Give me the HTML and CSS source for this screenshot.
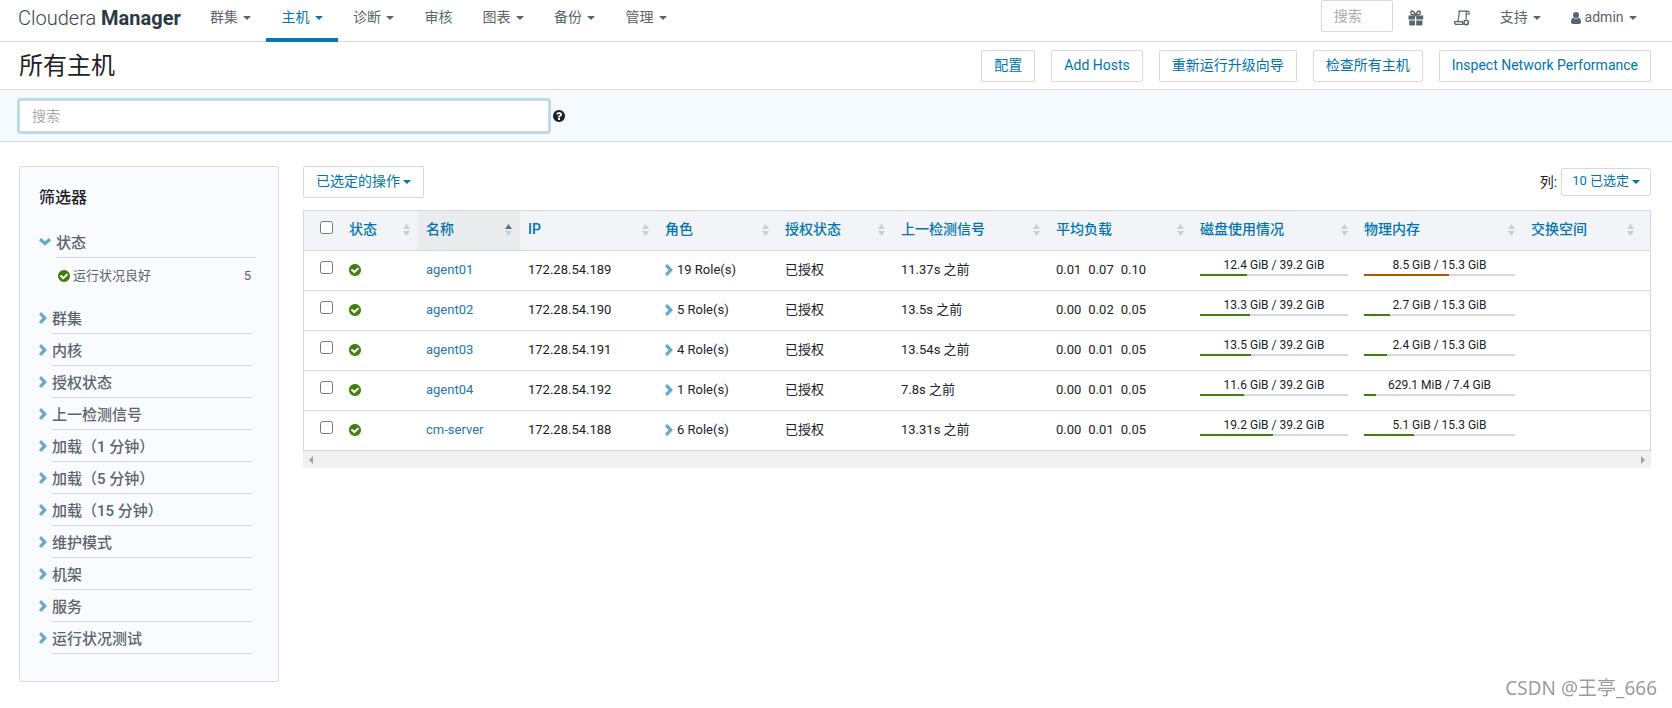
FILE: index.html
```html
<!DOCTYPE html>
<html lang="zh-CN">
<head>
<meta charset="utf-8">
<title>所有主机 - Cloudera Manager</title>
<link rel="stylesheet" href="styles.css">
</head>
<body>
<svg class="defs" aria-hidden="true">
  <symbol id="i-ok" viewBox="0 0 1536 1536"><circle cx="768" cy="768" r="700" fill="#fff"/><path fill="currentColor" d="M1284 606q0-28-18-46l-91-90q-19-19-45-19t-45 19l-408 407-226-226q-19-19-45-19t-45 19l-91 90q-18 18-18 46 0 27 18 45l362 362q19 19 45 19 27 0 46-19l543-543q18-18 18-45zm252 162q0 209-103 385.500t-279.500 279.500-385.500 103-385.500-103-279.500-279.500-103-385.500 103-385.500 279.500-279.500 385.500-103 385.500 103 279.500 279.500 103 385.500z"/></symbol>
  <symbol id="i-help" viewBox="128 128 1536 1536"><path fill="currentColor" d="M1024 1376v-192q0-14-9-23t-23-9h-192q-14 0-23 9t-9 23v192q0 14 9 23t23 9h192q14 0 23-9t9-23zm256-672q0-88-55.500-163t-138.500-116-170-41q-243 0-371 213-15 24 8 42l132 100q7 6 19 6 16 0 25-12 53-68 86-92 34-24 86-24 48 0 85.500 26t37.500 59q0 38-20 61t-68 45q-63 28-115.500 86.500t-52.500 125.500v36q0 14 9 23t23 9h192q14 0 23-9t9-23q0-19 21.500-49.500t54.500-49.500q32-18 49-28.500t46-35 44.500-48 28-60.500 12.500-81zm384 192q0 209-103 385.500t-279.500 279.500-385.500 103-385.500-103-279.500-279.500-103-385.500 103-385.500 279.500-279.500 385.500-103 385.500 103 279.500 279.500 103 385.500z"/></symbol>
  <symbol id="i-right" viewBox="0 0 8 12"><path fill="none" stroke="currentColor" stroke-width="3.200" d="M1.100 1.200 5.700 6l-4.600 4.800"/></symbol>
  <symbol id="i-down" viewBox="0 0 12 8"><path fill="none" stroke="currentColor" stroke-width="3.200" d="M1.100 1.300 6 5.700l4.900-4.400"/></symbol>
  <symbol id="i-sort" viewBox="0 0 7 12"><path class="up" d="M0 5 3.500 0 7 5z"/><path d="M0 7h7L3.500 12z"/></symbol>
  <symbol id="i-gift" viewBox="0 0 16 16"><path fill="currentColor" d="M0.500 5.500h6.500v4h-6.500zM8.200 5.500h7v4h-7zM1.200 10.500h5.800v5h-4.800q-1 0-1-1zM8.200 10.500h6.200v4q0 1-1 1h-5.200z"/><path fill="none" stroke="currentColor" stroke-width="1.500" d="M7.600 5.300C6 1.800 5 .9 3.900 1.100 2.500 1.400 2.600 4.600 4.400 4.800h6.400c1.800-.2 1.900-3.400.5-3.700C10.200.9 9.200 1.800 7.600 5.300z"/></symbol>
  <symbol id="i-scroll" viewBox="0 0 16 16"><g fill="none" stroke="currentColor" stroke-width="1.200"><path d="M4.400 1.200h9.200q1.600 0 1.600 1.800v1h-3V2.600q0-1.400 1.200-1.400M4.400 1.200q.9.300.9 1.600L4 11.500M12.200 4v5M9.500 14.400H2.200Q.4 14.200.7 11.600h7.600q0 2.400 1.400 2.800"/><circle cx="12.200" cy="12.500" r="2.200" stroke-width="1.600"/></g></symbol>
  <symbol id="i-user" viewBox="0 0 10 12"><path fill="currentColor" d="M5 0a3 3 0 0 1 3 3.200C8 5 6.700 6.400 5 6.400S2 5 2 3.200A3 3 0 0 1 5 0zM2.500 5.700C3.900 7.500 6.100 7.500 7.500 5.700 9.300 5.900 10 7.600 10 10c0 1.300-.8 2-1.900 2H1.900C.8 12 0 11.300 0 10c0-2.400.7-4.100 2.500-4.300z"/></symbol>
</svg>

<header class="navbar">
  <a class="brand" href="#">Cloudera <b>Manager</b></a>
  <nav class="menu">
    <a href="#">群集 <i class="caret"></i></a>
    <a href="#" class="active">主机 <i class="caret"></i></a>
    <a href="#">诊断 <i class="caret"></i></a>
    <a href="#">审核</a>
    <a href="#">图表 <i class="caret"></i></a>
    <a href="#">备份 <i class="caret"></i></a>
    <a href="#">管理 <i class="caret"></i></a>
  </nav>
  <div class="menu tools">
    <input class="nav-search" type="text" placeholder="搜索" aria-label="搜索">
    <a href="#" aria-label="新增功能"><svg class="icon16"><use href="#i-gift"/></svg></a>
    <a href="#" aria-label="运行命令"><svg class="icon16"><use href="#i-scroll"/></svg></a>
    <a href="#">支持 <i class="caret"></i></a>
    <a href="#"><svg class="user"><use href="#i-user"/></svg> admin <i class="caret"></i></a>
  </div>
</header>

<div class="titlebar">
  <h1>所有主机</h1>
  <div class="actions">
    <button class="btn">配置</button>
    <button class="btn">Add Hosts</button>
    <button class="btn">重新运行升级向导</button>
    <button class="btn">检查所有主机</button>
    <button class="btn">Inspect Network Performance</button>
  </div>
</div>

<div class="searchbar">
  <input type="text" class="host-search" placeholder="搜索" aria-label="搜索主机">
  <svg class="help"><use href="#i-help"/></svg>
</div>

<main class="content">
  <aside class="filters">
    <h2>筛选器</h2>
    <section class="open">
      <button class="facet"><svg class="down"><use href="#i-down"/></svg><span>状态</span></button>
      <a class="option" href="#"><svg class="ok small"><use href="#i-ok"/></svg><span>运行状况良好</span><span class="count">5</span></a>
    </section>
    <button class="facet"><svg class="right"><use href="#i-right"/></svg><span>群集</span></button>
    <button class="facet"><svg class="right"><use href="#i-right"/></svg><span>内核</span></button>
    <button class="facet"><svg class="right"><use href="#i-right"/></svg><span>授权状态</span></button>
    <button class="facet"><svg class="right"><use href="#i-right"/></svg><span>上一检测信号</span></button>
    <button class="facet"><svg class="right"><use href="#i-right"/></svg><span>加载（1 分钟）</span></button>
    <button class="facet"><svg class="right"><use href="#i-right"/></svg><span>加载（5 分钟）</span></button>
    <button class="facet"><svg class="right"><use href="#i-right"/></svg><span>加载（15 分钟）</span></button>
    <button class="facet"><svg class="right"><use href="#i-right"/></svg><span>维护模式</span></button>
    <button class="facet"><svg class="right"><use href="#i-right"/></svg><span>机架</span></button>
    <button class="facet"><svg class="right"><use href="#i-right"/></svg><span>服务</span></button>
    <button class="facet"><svg class="right"><use href="#i-right"/></svg><span>运行状况测试</span></button>
  </aside>

  <section class="hosts">
    <div class="toolbar">
      <button class="btn">已选定的操作<i class="caret"></i></button>
      <div class="columns">
        <label for="columns">列:</label>
        <button class="btn compact" id="columns">10 已选定<i class="caret"></i></button>
      </div>
    </div>
    <table>
      <colgroup><col class="c-check"><col class="c-state"><col class="c-name"><col class="c-ip"><col class="c-role"><col class="c-auth"><col class="c-beat"><col class="c-load"><col class="c-disk"><col class="c-mem"><col class="c-swap"></colgroup>
      <thead>
        <tr>
          <th class="check"><input type="checkbox" aria-label="全选"></th>
          <th><button>状态<svg><use href="#i-sort"/></svg></button></th>
          <th class="sorted"><button>名称<svg><use href="#i-sort"/></svg></button></th>
          <th><button>IP<svg><use href="#i-sort"/></svg></button></th>
          <th><button>角色<svg><use href="#i-sort"/></svg></button></th>
          <th><button>授权状态<svg><use href="#i-sort"/></svg></button></th>
          <th><button>上一检测信号<svg><use href="#i-sort"/></svg></button></th>
          <th><button>平均负载<svg><use href="#i-sort"/></svg></button></th>
          <th><button>磁盘使用情况<svg><use href="#i-sort"/></svg></button></th>
          <th><button>物理内存<svg><use href="#i-sort"/></svg></button></th>
          <th class="last"><button>交换空间<svg><use href="#i-sort"/></svg></button></th>
        </tr>
      </thead>
      <tbody>
        <tr>
          <td class="check"><input type="checkbox" aria-label="agent01"></td>
          <td><svg class="ok"><use href="#i-ok"/></svg></td>
          <td><a href="#">agent01</a></td><td>172.28.54.189</td>
          <td><span class="roles"><svg class="right"><use href="#i-right"/></svg>19 Role(s)</span></td>
          <td>已授权</td><td>11.37s 之前</td>
          <td><span class="load"><span>0.01</span><span>0.07</span><span>0.10</span></span></td>
          <td class="meter">12.4 GiB / 39.2 GiB<div class="bar"><div style="width:31.6%"></div></div></td>
          <td class="meter">8.5 GiB / 15.3 GiB<div class="bar warn"><div style="width:56%"></div></div></td>
          <td></td>
        </tr>
        <tr>
          <td class="check"><input type="checkbox" aria-label="agent02"></td>
          <td><svg class="ok"><use href="#i-ok"/></svg></td>
          <td><a href="#">agent02</a></td><td>172.28.54.190</td>
          <td><span class="roles"><svg class="right"><use href="#i-right"/></svg>5 Role(s)</span></td>
          <td>已授权</td><td>13.5s 之前</td>
          <td><span class="load"><span>0.00</span><span>0.02</span><span>0.05</span></span></td>
          <td class="meter">13.3 GiB / 39.2 GiB<div class="bar"><div style="width:33.9%"></div></div></td>
          <td class="meter">2.7 GiB / 15.3 GiB<div class="bar"><div style="width:17.4%"></div></div></td>
          <td></td>
        </tr>
        <tr>
          <td class="check"><input type="checkbox" aria-label="agent03"></td>
          <td><svg class="ok"><use href="#i-ok"/></svg></td>
          <td><a href="#">agent03</a></td><td>172.28.54.191</td>
          <td><span class="roles"><svg class="right"><use href="#i-right"/></svg>4 Role(s)</span></td>
          <td>已授权</td><td>13.54s 之前</td>
          <td><span class="load"><span>0.00</span><span>0.01</span><span>0.05</span></span></td>
          <td class="meter">13.5 GiB / 39.2 GiB<div class="bar"><div style="width:34.4%"></div></div></td>
          <td class="meter">2.4 GiB / 15.3 GiB<div class="bar"><div style="width:15.4%"></div></div></td>
          <td></td>
        </tr>
        <tr>
          <td class="check"><input type="checkbox" aria-label="agent04"></td>
          <td><svg class="ok"><use href="#i-ok"/></svg></td>
          <td><a href="#">agent04</a></td><td>172.28.54.192</td>
          <td><span class="roles"><svg class="right"><use href="#i-right"/></svg>1 Role(s)</span></td>
          <td>已授权</td><td>7.8s 之前</td>
          <td><span class="load"><span>0.00</span><span>0.01</span><span>0.05</span></span></td>
          <td class="meter">11.6 GiB / 39.2 GiB<div class="bar"><div style="width:29.6%"></div></div></td>
          <td class="meter">629.1 MiB / 7.4 GiB<div class="bar"><div style="width:8.200%"></div></div></td>
          <td></td>
        </tr>
        <tr>
          <td class="check"><input type="checkbox" aria-label="cm-server"></td>
          <td><svg class="ok"><use href="#i-ok"/></svg></td>
          <td><a href="#">cm-server</a></td><td>172.28.54.188</td>
          <td><span class="roles"><svg class="right"><use href="#i-right"/></svg>6 Role(s)</span></td>
          <td>已授权</td><td>13.31s 之前</td>
          <td><span class="load"><span>0.00</span><span>0.01</span><span>0.05</span></span></td>
          <td class="meter">19.2 GiB / 39.2 GiB<div class="bar"><div style="width:49%"></div></div></td>
          <td class="meter">5.1 GiB / 15.3 GiB<div class="bar"><div style="width:33.3%"></div></div></td>
          <td></td>
        </tr>
      </tbody>
    </table>
    <div class="hscroll"><svg viewBox="0 0 4 8"><path d="M4 0v8L0 4z"/></svg><svg viewBox="0 0 4 8"><path d="M0 0v8l4-4z"/></svg></div>
  </section>
</main>
<div class="watermark">CSDN @王亭_666</div>
</body>
</html>
```

FILE: styles.css
```css
* { box-sizing: border-box; }
body {
  margin: 0;
  background: #fff;
  color: #1b2127;
  font: 14px/20px Roboto, "Noto Sans CJK SC", sans-serif;
}
a { color: #2277ab; text-decoration: none; }
button, input { font: inherit; color: inherit; }
button { margin: 0; padding: 0; border: 0; background: none; cursor: pointer; }
svg { flex: none; display: block; }
.defs { position: absolute; width: 0; height: 0; }
.caret {
  display: inline-block;
  margin-left: 2px;
  vertical-align: middle;
  border: 4px solid transparent;
  border-top-color: currentColor;
  border-bottom: 0;
}

/* Navigation */
.navbar {
  display: flex;
  height: 42px;
  padding: 0 20px 0 18px;
  border-bottom: 1px solid #d6d8dd;
}
.brand {
  width: 177px;
  padding-top: 6px;
  color: #37474f;
  font-size: 20px;
  font-weight: 300;
  line-height: 24px;
  white-space: nowrap;
}
.brand b { font-weight: 700; color: #2b3a42; }
.menu { display: flex; }
.menu a {
  height: 42px;
  padding: 7px 15px 0;
  color: #5a656d;
  white-space: nowrap;
}
.menu a.active { color: #0077b3; border-bottom: 4px solid #0077b3; }
.tools { margin-left: auto; }
.tools a svg { display: inline-block; vertical-align: middle; }
.icon16 { width: 16px; height: 16px; }
.user { width: 10px; height: 12px; }
.nav-search {
  width: 72px;
  height: 32px;
  padding: 0 12px;
  border: 1px solid #d6d8dd;
  border-radius: 2px;
}
::placeholder { color: #aaa; opacity: 1; }

/* Page title */
.titlebar {
  display: flex;
  align-items: center;
  justify-content: space-between;
  height: 48px;
  padding: 0 21px 0 19px;
  border-bottom: 1px solid #d6d8dd;
}
h1 { margin: 0; font-size: 24px; font-weight: 400; line-height: 32px; }
.actions { display: flex; gap: 16px; }
.btn {
  height: 32px;
  padding: 0 12px 2px;
  border: 1px solid #d6d8dd;
  border-radius: 2px;
  background: #fff;
  color: #0074b0;
  white-space: nowrap;
}
.btn .caret { margin-left: 3px; }
.btn.compact { height: 28px; padding: 0 10px 2px; font-size: 13px; }

/* Host search */
.searchbar {
  display: flex;
  align-items: center;
  gap: 4px;
  height: 52px;
  padding: 0 19px;
  border-bottom: 1px solid #d6d8dd;
  background: #f5fafe;
}
.host-search {
  width: 530px;
  height: 32px;
  padding: 0 12px;
  border: 1px solid #d6d8dd;
  border-radius: 2px;
  box-shadow: 0 0 0 2px #b8d9e8;
}
.help { width: 12px; height: 12px; }

/* Layout */
.content { display: flex; gap: 24px; padding: 24px 21px 0 19px; align-items: flex-start; }
.filters {
  flex: none;
  width: 260px;
  padding: 21px 26px 27px 19px;
  border: 1px solid #d6d8dd;
  border-radius: 2px;
  background: #fafbfe;
  color: #5a656d;
}
.filters h2 { margin: 0 0 22px; color: #1b2127; font-size: 16px; font-weight: 500; line-height: 20px; }
.facet {
  display: flex;
  align-items: center;
  gap: 5px;
  width: 100%;
  height: 32px;
  text-align: left;
  font-size: 15px;
  font-weight: 500;
}
.facet span { flex: 1; height: 32px; padding-top: 4px; line-height: 26px; border-bottom: 1px solid #d6d8dd; }
.facet svg { color: #62a9cf; }
.right { width: 8px; height: 12px; color: #62a9cf; }
.down { width: 12px; height: 8px; }
.open { margin: 0 -4px 8px 0; }
.open .facet { margin-top: -4px; }
.option {
  display: flex;
  align-items: center;
  gap: 3px;
  height: 36px;
  padding: 0 5px 0 19px;
  color: #5a656d;
  font-size: 13px;
}
.count { margin-left: auto; }
.ok { width: 12px; height: 12px; color: #3f7f0e; }

.hosts { flex: 1; min-width: 0; }
.toolbar { display: flex; align-items: center; justify-content: space-between; margin-bottom: 12px; }
.columns { display: flex; align-items: center; gap: 4px; }

/* Table */
table {
  width: 100%;
  table-layout: fixed;
  border-collapse: separate;
  border-spacing: 0;
  border: 1px solid #d6d8dd;
  border-bottom: 0;
  font-size: 13px;
}
th, td { height: 40px; padding: 0 8px 2px; border-bottom: 1px solid #d6d8dd; text-align: left; white-space: nowrap; }
th { padding-bottom: 4px; background: #f3f4f7; color: #0074b0; font-size: 14px; font-weight: 500; }
th.sorted { background: #e9ebed; }
th button { display: flex; align-items: center; justify-content: space-between; width: 100%; }
th svg { width: 7px; height: 12px; margin-top: 2px; fill: #cbcdd2; }
.up { fill: var(--up, #cbcdd2); }
th.sorted { --up: #56738f; }
th.last { padding-right: 16px; }
th.check, td.check { padding: 0 0 7px 16px; }
.check input { display: block; width: 13px; height: 13px; margin: 0; }
.roles { display: flex; align-items: center; gap: 4px; }
.load { display: flex; gap: 7px; }
td.meter { padding-bottom: 10px; font-size: 12px; line-height: 18px; text-align: center; }
.bar { height: 2px; background: #d6d8dd; }
.bar div { height: 2px; background: #3f7f0e; }
.bar.warn div { background: #b35500; }
.c-check { width: 37px; }
.c-state { width: 77px; }
.c-name { width: 102px; }
.c-ip { width: 137px; }
.c-role { width: 120px; }
.c-auth { width: 116px; }
.c-beat { width: 155px; }
.c-load { width: 144px; }
.c-disk { width: 164px; }
.c-mem { width: 167px; }
.c-swap { width: 127px; }

.hscroll { display: flex; align-items: center; justify-content: space-between; height: 17px; padding: 0 6px; background: #f0f0f0; }
.hscroll svg { width: 4px; height: 8px; fill: #a0a0a0; }

.watermark {
  position: fixed;
  right: 15px;
  bottom: 7px;
  color: #9a9a9a;
  font: 400 19px/26px "Noto Sans", "Noto Sans CJK SC", sans-serif;
}
```
